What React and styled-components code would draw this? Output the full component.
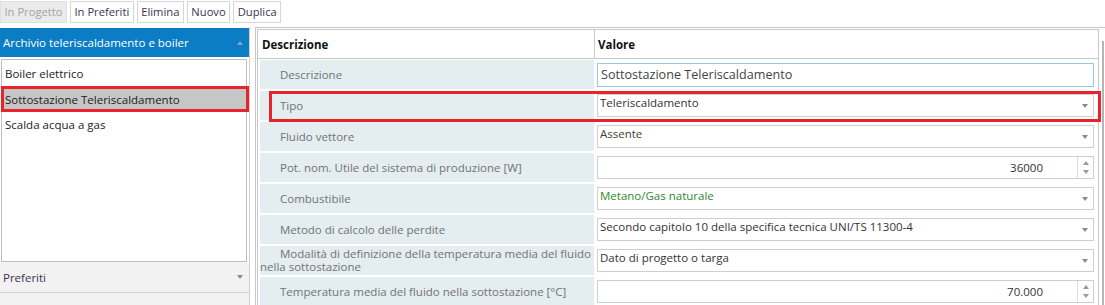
import React from 'react';
import styled, { createGlobalStyle } from 'styled-components';

const Global = createGlobalStyle`
  html, body { margin: 0; padding: 0; background: #fff; }
  body { font-family: "Open Sans", "Noto Sans", sans-serif; font-size: 11.5px; color: #333; }
  * { box-sizing: border-box; }
`;

const Page = styled.div`
  width: 1105px;
  height: 305px;
  overflow: hidden;
  display: flex;
  flex-direction: column;
  background: #fff;
`;

const Toolbar = styled.div`
  flex: none;
  height: 27px;
  display: flex;
  align-items: flex-start;
  gap: 3px;
  padding-top: 1px;
`;

const ToolButton = styled.button`
  height: 22px;
  padding: 0 3.5px;
  font: inherit;
  font-size: 11.2px;
  line-height: 20px;
  border: 1px solid ${p => (p.disabled ? '#e0e0e0' : '#d6d6d6')};
  background: ${p => (p.disabled ? '#ebebeb' : '#fff')};
  color: ${p => (p.disabled ? '#a3a3a3' : '#3a3350')};
  cursor: default;
`;

const Main = styled.div`
  flex: 1;
  display: flex;
  min-height: 0;
`;

const LeftPanel = styled.div`
  flex: none;
  width: 250px;
  display: flex;
  flex-direction: column;
  border-right: 1px solid #cfcfcf;
  padding-top: 1px;
`;

const PanelHeader = styled.div`
  flex: none;
  height: 29px;
  background: #0b7dc4;
  color: #fff;
  display: flex;
  align-items: center;
  justify-content: space-between;
  padding: 0 6px 0 3px;
`;

const Caret = styled.span`
  width: 0;
  height: 0;
  border-left: 3.5px solid transparent;
  border-right: 3.5px solid transparent;
  ${p => (p.$up ? `border-bottom: 4px solid ${p.$color};` : `border-top: 4px solid ${p.$color};`)}
`;

const ListBox = styled.div`
  flex: none;
  height: 203px;
  margin: 2px 2px 0 1px;
  border: 1px solid #bdbdbd;
  padding-top: 1px;
`;

const ListItem = styled.div`
  height: 25px;
  display: flex;
  align-items: center;
  padding-left: ${p => (p.$selected ? '1px' : '3px')};
  color: #222;
  ${p =>
    p.$selected &&
    `
    background: #c6c6c6;
    border: 3px solid #e8232b;
    margin: 0 -3px 0 -1px;
    height: 26px;
  `}
`;

const Section = styled.div`
  flex: none;
  height: 31px;
  background: #f2f2f2;
  border-bottom: 1px solid #d3d3d3;
  display: flex;
  align-items: center;
  justify-content: space-between;
  padding: 0 6px 0 3px;
  color: #3a3350;
`;

const Splitter = styled.div`
  flex: none;
  width: 5px;
  background: #fff;
`;

const RightPanel = styled.div`
  flex: 1;
  display: flex;
  border-left: 1px solid #c8c8c8;
  border-top: 1px solid #c8c8c8;
  padding: 1px 0 0 1px;
  min-width: 0;
`;

const Grid = styled.div`
  flex: 1;
  border-left: 1px solid #c8c8c8;
  border-top: 1px solid #c8c8c8;
  border-right: 1px solid #c8c8c8;
  min-width: 0;
`;

const Gutter = styled.div`
  flex: none;
  width: 6px;
  padding: 12px 0 0 3px;
  display: flex;
`;

const GutterLine = styled.div`
  width: 2px;
  background: #b5b5b5;
`;

const HeaderRow = styled.div`
  display: grid;
  grid-template-columns: 337px 1fr;
  height: 29px;
  border-bottom: 1px solid #c8c8c8;
`;

const HeaderCell = styled.div`
  display: flex;
  align-items: center;
  padding-left: ${p => (p.$first ? '4px' : '3px')};
  font-weight: 700;
  color: #111;
  ${p => p.$first && 'border-right: 1px solid #c8c8c8;'}
`;

const Row = styled.div`
  position: relative;
  display: grid;
  grid-template-columns: 337px 1fr;
  height: 31px;
`;

const LabelCell = styled.div`
  margin: 1px 1px 1px 2px;
  background: #e4edef;
  color: #737373;
  display: flex;
  align-items: center;
  line-height: 13px;
  text-indent: 20px;
  padding-bottom: 1px;
`;

const ValueCell = styled.div`
  display: flex;
  align-items: center;
  padding: 0 4px 0 2px;
`;

const TextBox = styled.div`
  flex: 1;
  height: 24px;
  border: 1px solid #8fcbe8;
  display: flex;
  align-items: center;
  padding: 0 3px;
  font-size: 12.6px;
  color: #444;
`;

const SelectBox = styled.div`
  flex: 1;
  height: 23px;
  border: 1px solid #cfcfcf;
  display: flex;
  padding: 0 5px 0 2px;
  line-height: 16px;
  color: ${p => p.$color || '#333'};
`;

const SelectText = styled.span`
  flex: 1;
`;

const SelectArrow = styled(Caret)`
  align-self: center;
  margin-top: 1px;
`;

const NumberBox = styled.div`
  flex: 1;
  height: 23px;
  border: 1px solid #cfcfcf;
  display: flex;
`;

const NumberValue = styled.span`
  flex: 1;
  align-self: center;
  text-align: right;
  padding-right: 34px;
  color: #333;
`;

const Spinner = styled.div`
  flex: none;
  width: 16px;
  border-left: 1px solid #dcdcdc;
  display: flex;
  flex-direction: column;
  align-items: center;
  justify-content: center;
  gap: 5px;
`;

const Highlight = styled.div`
  position: absolute;
  top: 1px;
  left: 11px;
  right: -3px;
  bottom: -1px;
  border: 3px solid #e8232b;
  pointer-events: none;
  z-index: 1;
`;

const items = [
  { name: 'Boiler elettrico' },
  { name: 'Sottostazione Teleriscaldamento', selected: true },
  { name: 'Scalda acqua a gas' },
];

const rows = [
  { label: 'Descrizione', kind: 'text', value: 'Sottostazione Teleriscaldamento' },
  { label: 'Tipo', kind: 'select', value: 'Teleriscaldamento', highlight: true },
  { label: 'Fluido vettore', kind: 'select', value: 'Assente', color: '#4a3d33' },
  { label: 'Pot. nom. Utile del sistema di produzione [W]', kind: 'number', value: '36000' },
  { label: 'Combustibile', kind: 'select', value: 'Metano/Gas naturale', color: '#2e8a2e' },
  { label: 'Metodo di calcolo delle perdite', kind: 'select', value: 'Secondo capitolo 10 della specifica tecnica UNI/TS 11300-4' },
  { label: 'Modalità di definizione della temperatura media del fluido nella sottostazione', kind: 'select', value: 'Dato di progetto o targa' },
  { label: 'Temperatura media del fluido nella sottostazione [°C]', kind: 'number', value: '70.000' },
];

function Value({ row }) {
  if (row.kind === 'text') return <TextBox>{row.value}</TextBox>;
  if (row.kind === 'number')
    return (
      <NumberBox>
        <NumberValue>{row.value}</NumberValue>
        <Spinner>
          <Caret $up $color="#9a9a9a" />
          <Caret $color="#9a9a9a" />
        </Spinner>
      </NumberBox>
    );
  return (
    <SelectBox $color={row.color}>
      <SelectText>{row.value}</SelectText>
      <SelectArrow $color="#8a8a8a" />
    </SelectBox>
  );
}

export default function App() {
  return (
    <Page>
      <Global />
      <Toolbar>
        <ToolButton disabled>In Progetto</ToolButton>
        <ToolButton>In Preferiti</ToolButton>
        <ToolButton>Elimina</ToolButton>
        <ToolButton>Nuovo</ToolButton>
        <ToolButton>Duplica</ToolButton>
      </Toolbar>
      <Main>
        <LeftPanel>
          <PanelHeader>
            <span>Archivio teleriscaldamento e boiler</span>
            <Caret $up $color="#7ea5c4" />
          </PanelHeader>
          <ListBox>
            {items.map(it => (
              <ListItem key={it.name} $selected={it.selected}>
                {it.name}
              </ListItem>
            ))}
          </ListBox>
          <Section>
            <span>Preferiti</span>
            <Caret $color="#8a8a8a" />
          </Section>
          <Section>
            <span>Standard</span>
            <Caret $color="#8a8a8a" />
          </Section>
        </LeftPanel>
        <Splitter />
        <RightPanel>
          <Grid>
            <HeaderRow>
              <HeaderCell $first>Descrizione</HeaderCell>
              <HeaderCell>Valore</HeaderCell>
            </HeaderRow>
            {rows.map(r => (
              <Row key={r.label}>
                <LabelCell>
                  <span>{r.label}</span>
                </LabelCell>
                <ValueCell>
                  <Value row={r} />
                </ValueCell>
                {r.highlight && <Highlight />}
              </Row>
            ))}
          </Grid>
          <Gutter>
            <GutterLine />
          </Gutter>
        </RightPanel>
      </Main>
    </Page>
  );
}
